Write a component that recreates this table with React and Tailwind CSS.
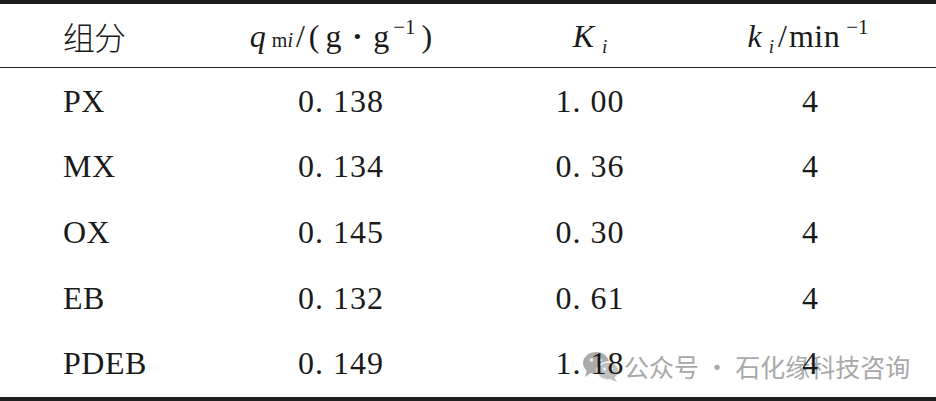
import React from 'react';

const rows = [
  { name: 'PX', q: '0. 138', K: '1. 00', k: '4' },
  { name: 'MX', q: '0. 134', K: '0. 36', k: '4' },
  { name: 'OX', q: '0. 145', K: '0. 30', k: '4' },
  { name: 'EB', q: '0. 132', K: '0. 61', k: '4' },
  { name: 'PDEB', q: '0. 149', K: '1. 18', k: '4' },
];

const serif = { fontFamily: '"Liberation Serif", "Noto Sans CJK SC", serif' };

const WeChatIcon = () => (
  <svg width="40" height="34" viewBox="0 0 40 34">
    <ellipse cx="15" cy="13" rx="13" ry="11" fill="#ababab" />
    <path d="M6 20 L4 27 L11 22 Z" fill="#ababab" />
    <circle cx="10.5" cy="10" r="1.8" fill="#f2f2f2" />
    <circle cx="19" cy="10" r="1.8" fill="#f2f2f2" />
    <ellipse cx="27" cy="21" rx="11" ry="9" fill="#c0c0c0" stroke="#f5f5f5" strokeWidth="1.5" />
    <path d="M33 27 L36 32 L29 29 Z" fill="#c0c0c0" />
    <circle cx="23.5" cy="19" r="1.5" fill="#f2f2f2" />
    <circle cx="30.5" cy="19" r="1.5" fill="#f2f2f2" />
  </svg>
);

export default function App() {
  return (
    <div className="relative w-[936px] h-[401px] bg-white text-[#1a1a1a]" style={serif}>
      {/* watermark, sits under the table text */}
      <div className="absolute left-[581px] top-[348px] flex items-center gap-[3px]">
        <WeChatIcon />
        <span
          className="text-[25px] text-[#a8a8a8] whitespace-pre"
          style={{ fontFamily: '"Noto Sans CJK SC", sans-serif' }}
        >
          公众号 · 石化缘科技咨询
        </span>
      </div>

      <div className="relative h-[4px] bg-[#1e1e1e]" />

      {/* header */}
      <div className="relative grid grid-cols-[200px_282px_216px_220px] h-[64px] items-center border-b border-[#222] text-[32px]">
        <div className="pl-[63px] tracking-[-1px]" style={{ fontFamily: '"Noto Sans CJK SC", sans-serif', fontWeight: 300 }}>
          组分
        </div>
        <div className="flex justify-center items-baseline">
          <span className="italic">q</span>
          <span className="text-[20px] ml-[6px]">m<span className="italic">i</span></span>
          <span className="ml-[3px]">/</span>
          <span className="ml-[4px]">(</span>
          <span className="ml-[6px]">g</span>
          <span className="mx-[12px] text-[22px] relative -top-[3px]">•</span>
          <span>g</span>
          <span className="text-[21px] relative -top-[13px] ml-[4px]">−1</span>
          <span className="ml-[6px]">)</span>
        </div>
        <div className="flex justify-center items-baseline">
          <span className="italic">K</span>
          <span className="italic text-[19px] ml-[8px] relative top-[6px]">i</span>
        </div>
        <div className="flex justify-center items-baseline">
          <span className="italic">k</span>
          <span className="italic text-[19px] ml-[7px] relative top-[6px]">i</span>
          <span className="ml-[4px]">/</span>
          <span className="ml-[2px] tracking-[0.5px]">min</span>
          <span className="text-[21px] relative -top-[13px] ml-[6px]">−1</span>
        </div>
      </div>

      {/* body */}
      <div className="relative flex flex-col">
        {rows.map((r) => (
          <div key={r.name} className="grid grid-cols-[200px_282px_216px_220px] h-[65.6px] items-center text-[32px]">
            <div className="pl-[63px] tracking-[0.5px]">{r.name}</div>
            <div className="text-center tracking-[1px] whitespace-pre">{r.q}</div>
            <div className="text-center tracking-[1px] whitespace-pre">{r.K}</div>
            <div className="text-center pl-[4px]">{r.k}</div>
          </div>
        ))}
      </div>

      <div className="absolute left-0 right-0 bottom-0 h-[4px] bg-[#1e1e1e]" />
    </div>
  );
}
